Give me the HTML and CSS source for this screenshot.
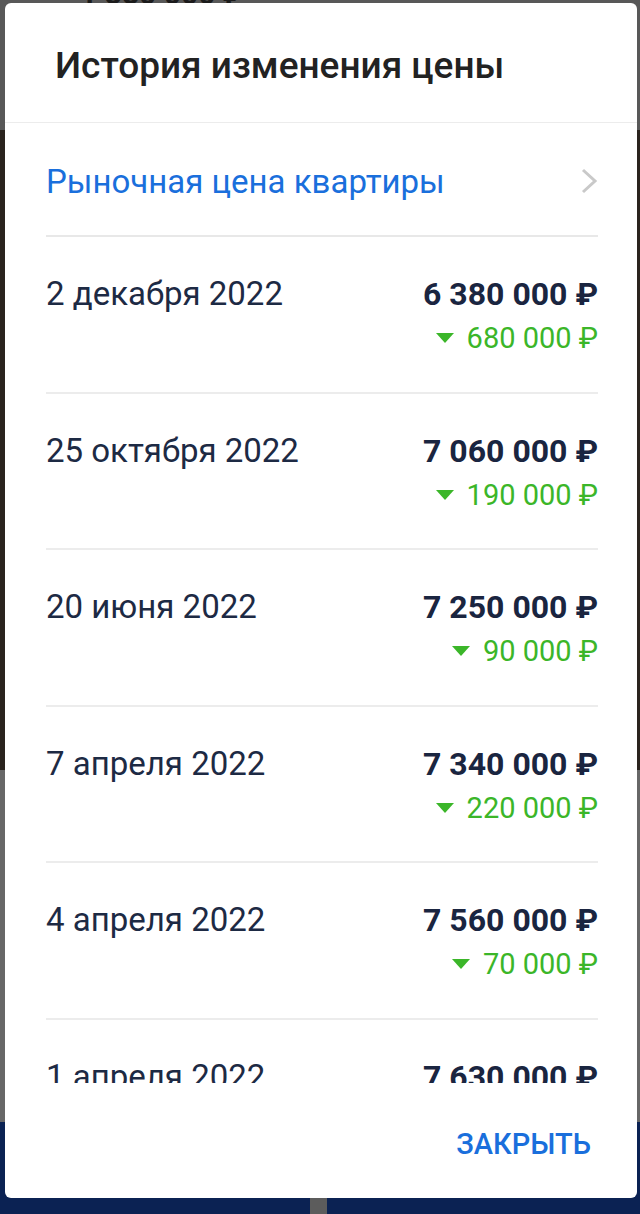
FILE: index.html
```html
<!DOCTYPE html>
<html>
<head>
    <title>История изменения цены</title>
    <link rel="stylesheet" href="styles.css">
</head>
<body>
    <div class="backdrop">
        <div class="bg-top"><span class="bg-price">1 380 000 ₽</span></div>
        <div class="bg-photo"></div>
        <div class="bg-mid"></div>
        <div class="bg-bottom"><div class="bg-handle"></div></div>
    </div>

    <div class="dialog">
        <div class="dialog-header">
            <h1>История изменения цены</h1>
        </div>
        <div class="dialog-body">
            <a class="market-link" href="#">
                <span>Рыночная цена квартиры</span>
                <svg class="chevron" width="18" height="28" viewBox="0 0 18 28">
                    <path d="M3 3 L15 14 L3 25" fill="none" stroke="#c9c9c9" stroke-width="3"/>
                </svg>
            </a>
            <div class="history-row">
                <div class="date">2 декабря 2022</div>
                <div class="prices">
                    <div class="price">6 380 000 ₽</div>
                    <div class="change"><svg class="arrow" width="18" height="10" viewBox="0 0 18 10"><path d="M0 0 H18 L9 10 Z"/></svg>680 000 ₽</div>
                </div>
            </div>
            <div class="history-row">
                <div class="date">25 октября 2022</div>
                <div class="prices">
                    <div class="price">7 060 000 ₽</div>
                    <div class="change"><svg class="arrow" width="18" height="10" viewBox="0 0 18 10"><path d="M0 0 H18 L9 10 Z"/></svg>190 000 ₽</div>
                </div>
            </div>
            <div class="history-row">
                <div class="date">20 июня 2022</div>
                <div class="prices">
                    <div class="price">7 250 000 ₽</div>
                    <div class="change"><svg class="arrow" width="18" height="10" viewBox="0 0 18 10"><path d="M0 0 H18 L9 10 Z"/></svg>90 000 ₽</div>
                </div>
            </div>
            <div class="history-row">
                <div class="date">7 апреля 2022</div>
                <div class="prices">
                    <div class="price">7 340 000 ₽</div>
                    <div class="change"><svg class="arrow" width="18" height="10" viewBox="0 0 18 10"><path d="M0 0 H18 L9 10 Z"/></svg>220 000 ₽</div>
                </div>
            </div>
            <div class="history-row">
                <div class="date">4 апреля 2022</div>
                <div class="prices">
                    <div class="price">7 560 000 ₽</div>
                    <div class="change"><svg class="arrow" width="18" height="10" viewBox="0 0 18 10"><path d="M0 0 H18 L9 10 Z"/></svg>70 000 ₽</div>
                </div>
            </div>
            <div class="history-row">
                <div class="date">1 апреля 2022</div>
                <div class="prices">
                    <div class="price">7 630 000 ₽</div>
                </div>
            </div>
        </div>
        <div class="dialog-footer">
            <button type="button">Закрыть</button>
        </div>
    </div>
</body>
</html>
```

FILE: styles.css
```css
body {
    font-family: Roboto, "Noto Sans", Arial, sans-serif;
    margin: 0;
    padding: 0;
    width: 640px;
    height: 1214px;
    overflow: hidden;
    position: relative;
}
.backdrop {
    height: 1214px;
    display: flex;
    flex-direction: column;
}
.bg-top {
    height: 130px;
    background: #585858;
    padding-left: 80px;
}
.bg-price {
    display: block;
    margin-top: -24px;
    font-size: 30px;
    font-weight: bold;
    color: #1b1b1b;
}
.bg-photo {
    height: 640px;
    background: #2a231e;
}
.bg-mid {
    height: 352px;
    background: #676767;
}
.bg-bottom {
    flex: 1;
    background: #0b2253;
    display: flex;
    justify-content: center;
    align-items: flex-end;
}
.bg-handle {
    width: 17px;
    height: 16px;
    background: #5c5c5c;
    margin-right: 4px;
}
.dialog {
    position: absolute;
    top: 3px;
    left: 5px;
    width: 632px;
    height: 1195px;
    background: #fff;
    border-radius: 6px;
    display: flex;
    flex-direction: column;
    overflow: hidden;
}
.dialog-header {
    height: 120px;
    border-bottom: 1px solid #ececec;
    padding: 6px 0 0 50px;
    display: flex;
    align-items: center;
    box-sizing: border-box;
}
h1 {
    margin: 0;
    font-size: 37px;
    font-weight: 500;
    color: #222;
}
.dialog-body {
    height: 960px;
    overflow: hidden;
    padding: 0 39px 0 41px;
}
.market-link {
    display: flex;
    justify-content: space-between;
    align-items: center;
    height: 114px;
    padding-top: 4px;
    border-bottom: 2px solid #e8e8e8;
    box-sizing: border-box;
    text-decoration: none;
    color: #1a6fdc;
    font-size: 33px;
}
.history-row {
    display: flex;
    justify-content: space-between;
    padding: 38px 0 36.6px;
    border-bottom: 2px solid #ececec;
}
.date {
    font-size: 33px;
    line-height: 38px;
    color: #1d2a44;
}
.prices {
    text-align: right;
}
.price {
    font-size: 32px;
    line-height: 38px;
    font-weight: bold;
    color: #1a2540;
}
.change {
    margin-top: 8px;
    font-size: 29px;
    line-height: 34px;
    color: #3bb629;
    display: flex;
    align-items: center;
    justify-content: flex-end;
}
.arrow {
    fill: #3bb629;
    margin-right: 13px;
}
.dialog-footer {
    flex: 1;
    display: flex;
    justify-content: flex-end;
    align-items: center;
    padding-right: 46px;
    padding-top: 6px;
}
button {
    background: none;
    border: none;
    padding: 0;
    font-family: inherit;
    font-size: 29px;
    font-weight: 500;
    color: #1a6fdc;
    text-transform: uppercase;
    cursor: pointer;
}
```
